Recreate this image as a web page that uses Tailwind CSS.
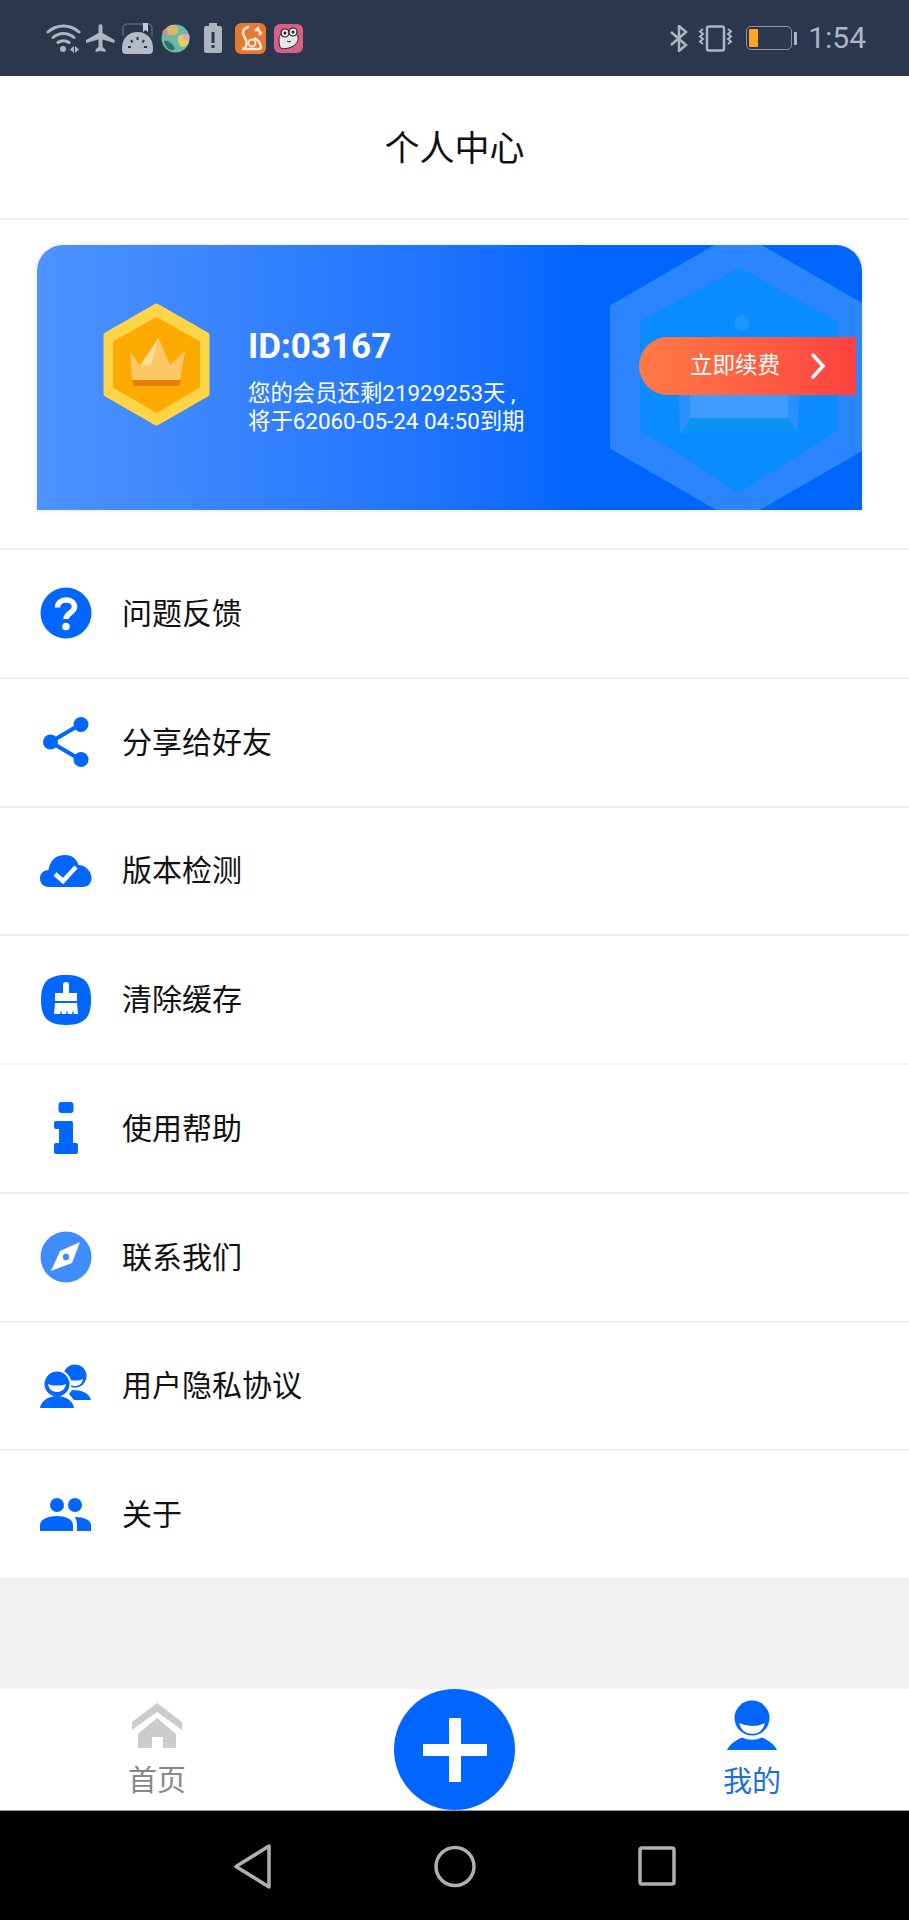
<!DOCTYPE html>
<html lang="zh-CN">
<head>
    <meta charset="UTF-8">
    <meta name="viewport" content="width=device-width, initial-scale=1.0">
    <title>个人中心</title>
    <script src="https://cdn.jsdelivr.net/npm/@tailwindcss/browser@4"></script>
</head>
<body class="bg-white font-['Roboto','Noto_Sans_CJK_SC',sans-serif] text-[#111]">
<div class="w-[909px] h-[1920px] flex flex-col overflow-hidden">

    <!-- status bar -->
    <div class="h-[76px] shrink-0 bg-[#2b374d] flex items-center pl-[46px] pr-[43px] text-[#aeb5c1]">
        <svg class="w-[35px] h-[30px]" viewBox="0 0 35 30" fill="none" stroke="currentColor" stroke-width="3" stroke-linecap="round"><path d="M2 9C11 1 24 1 33 9M7 14.500C13 9 22 9 28 14.500M12 19.500C15 17 20 17 23 19.500"/><circle cx="17" cy="26" r="3" fill="currentColor" stroke="none"/><path d="M28 23l-4 3.500 4 3.500zM29 23l4 3.500-4 3.500z" fill="currentColor" stroke="none"/></svg>
        <svg class="w-[29px] h-[29px] ml-[5px]" viewBox="0 0 29 29" fill="currentColor"><path d="M12.500 2c0-2.500 4-2.500 4 0v7l12 7v3l-12-3.500V23l3 2.500V28l-5-1-5 1v-2.500l3-2.500v-7.500L0 19v-3l12.500-7z"/></svg>
        <svg class="w-[31px] h-[31px] ml-[7px]" viewBox="0 0 31 31"><path d="M1 13V5a4 4 0 0 1 4-4h21a4 4 0 0 1 4 4v8" fill="none" stroke="#59647a" stroke-width="1.500"/><path d="M0 25C0 15 7 9 15.500 9S31 15 31 25v2a4 4 0 0 1-4 4H4a4 4 0 0 1-4-4z" fill="#b4bac6"/><path d="M21 0h5v9l-2.500-2-2.500 2z" fill="#c5cad3"/><path d="M15.500 14v3M9 17l1.500 2.500M22 17l-1.500 2.500M6 24h3M22 24h3" stroke="#2b374d" stroke-width="2"/></svg>
        <svg class="w-[29px] h-[29px] ml-[8px]" viewBox="0 0 29 29"><circle cx="14.500" cy="14.500" r="14" fill="#69b8a8"/><path d="M8 2c6-3 11 2 9 6s-8 4-12 2 0-6 3-8z" fill="#d9b763"/><path d="M18 12c4-3 9-2 10 2s-2 9-6 9-7-8-4-11z" fill="#e0cf62"/><path d="M3 17c5-1 9 3 11 8-4 3-9 0-11-8z" fill="#2f6f69"/><circle cx="25" cy="13" r="3.500" fill="#ef9dbb"/><circle cx="4" cy="8" r="2.500" fill="#df7fa1"/></svg>
        <svg class="w-[18px] h-[30px] ml-[14px]" viewBox="0 0 18 30"><rect x="5" y="0" width="8" height="3" fill="#aeb5c1"/><rect x="0" y="3" width="18" height="27" rx="2" fill="#aeb5c1"/><rect x="7.500" y="9" width="3" height="11" fill="#2b374d"/><rect x="7.500" y="22" width="3" height="3" fill="#2b374d"/></svg>
        <svg class="w-[31px] h-[31px] ml-[13px]" viewBox="0 0 31 31"><rect width="31" height="31" rx="6" fill="#e27a32"/><path d="M14 4c-6 1-7 5-5 9s4 6 2 10c-1 2-3 3-4 3h16c2 0 3-1 3-2-1-5-4-8-7-9M20 8l3-3 1 3 2 2-2 2" fill="none" stroke="#f5e4d4" stroke-width="2.500"/><circle cx="17" cy="20" r="3.500" fill="none" stroke="#f5e4d4" stroke-width="2"/></svg>
        <svg class="w-[29px] h-[29px] ml-[8px]" viewBox="0 0 29 29"><rect width="29" height="29" rx="6" fill="#d95f86"/><path d="M5 15c0-4 3-6 7-7 5-1 11 1 12 5 1 5-3 9-9 11-4 1-8 1-9-1-1-3-1-5-1-8z" fill="#e8e8ea" stroke="#222" stroke-width="1"/><circle cx="11" cy="9" r="4" fill="#e8e8ea" stroke="#222" stroke-width="1.200"/><circle cx="19" cy="8" r="4" fill="#e8e8ea" stroke="#222" stroke-width="1.200"/><circle cx="11" cy="9" r="1.500" fill="#222"/><circle cx="19" cy="8" r="1.500" fill="#222"/><path d="M13 17c1 1 3 1 4 0" fill="none" stroke="#222"/></svg>

        <svg class="w-[18px] h-[27px] ml-auto" viewBox="0 0 18 27" fill="none" stroke="currentColor" stroke-width="2.500"><path d="M1 7l15 13-7 6V1l7 6L1 20"/></svg>
        <svg class="w-[35px] h-[27px] ml-[10px]" viewBox="0 0 35 27" fill="none" stroke="currentColor" stroke-width="2.500"><rect x="9" y="1.500" width="17" height="24" rx="2"/><path d="M5 4l-3 2.500 3 2.500-3 2.500 3 2.500-3 2.500 3 2.500M30 4l3 2.500-3 2.500 3 2.500-3 2.500 3 2.500-3 2.500" stroke-width="2"/></svg>
        <div class="ml-[13px] w-[46px] h-[24px] rounded-[5px] border-[1.500px] border-[#8c94a3] p-[2px]">
            <div class="w-[9px] h-full bg-[#ffa51f] rounded-[1px]"></div>
        </div>
        <div class="ml-[2px] w-[3px] h-[13px] bg-[#aeb5c1] rounded-r-[1px]"></div>
        <span class="ml-[11px] text-[30px] leading-none">1:54</span>
    </div>

    <!-- title -->
    <div class="h-[142px] shrink-0 flex items-center justify-center text-[35px] pt-[7px]">个人中心</div>

    <!-- member card -->
    <div class="h-[330px] shrink-0 border-t-2 border-[#f0f0f0] pt-[25px] pl-[37px] pr-[47px]">
        <div class="relative h-[265px] rounded-t-[26px] overflow-hidden bg-linear-to-r from-[#4d92ff] to-[#0066ff] to-[66%] shadow-[0_0_6px_rgba(0,0,0,0.12)] flex items-center">
            <!-- big faded hexagon -->
            <svg class="absolute left-[573px] top-[-14px] w-[255px] h-[296px]" viewBox="0 0 255 296">
                <path d="M128 4L253 76V216L128 288L3 216V76Z" fill="#2b85ff" stroke="#2b85ff" stroke-width="6" stroke-linejoin="round"/>
                <path d="M129 42L223 94V196L129 256L35 196V94Z" fill="#0a8bff" stroke="#0a8bff" stroke-width="10" stroke-linejoin="round"/>
                <circle cx="132" cy="92" r="8" fill="#1a96ff"/>
                <path d="M68 150H190L188 202H70Z" fill="#2a8fff"/>
                <rect x="80" y="150" width="98" height="37" fill="#3f9bff"/>
                <path d="M80 187H178L188 202H72Z" fill="#0a93f5"/>
            </svg>

            <svg class="relative ml-[66px] mb-[26px] w-[107px] h-[123px] shrink-0" viewBox="0 0 107 123">
                <path d="M53.500 3L104 32V91L53.500 120L3 91V32Z" fill="#ffd548" stroke="#ffd548" stroke-width="5" stroke-linejoin="round"/>
                <path d="M53.500 15L96 39V84L53.500 109L11 84V39Z" fill="#ffaa00" stroke="#ffaa00" stroke-width="2" stroke-linejoin="round"/>
                <path d="M27 48L37 63L55.500 35L67 62L82 48L77 78H29Z" fill="#ffc866"/>
                <path d="M37 63L55.500 35L48 62Z" fill="#ffe09a"/>
                <path d="M29 77H78L76 83H31Z" fill="#e57f05"/>
            </svg>

            <div class="relative ml-[38px] mt-[7px] text-white">
                <div class="text-[35px] font-bold leading-[40px]">ID:03167</div>
                <div class="mt-[12px] text-[22.400px] leading-[28px] whitespace-nowrap">您的会员还剩21929253天 ,<br>将于62060-05-24 04:50到期</div>
            </div>

            <div class="relative ml-auto mr-[6px] mb-[24px] w-[217px] h-[58px] rounded-l-[29px] bg-linear-to-r from-[#ff7a45] to-[#ff4040] flex items-center pl-[51px] text-white text-[22.500px]">
                立即续费
                <svg class="ml-[31px] w-[15px] h-[26px]" viewBox="0 0 15 26" fill="none" stroke="currentColor" stroke-width="3.500" stroke-linecap="round"><path d="M2 2L12 13L2 24"/></svg>
            </div>
        </div>
    </div>

    <!-- menu -->
    <div class="shrink-0 text-[30px]">
        <div class="h-[128.750px] border-t-2 border-[#f0f0f0] flex items-center pl-[40px]">
            <svg class="w-[52px] h-[52px] mr-[30px]" viewBox="0 0 52 52"><circle cx="26" cy="26" r="25.500" fill="#0066ff"/><path d="M17.500 20.500C17.500 10.500 34.500 10.500 34.500 20C34.500 25.500 26 26 26 32" fill="none" stroke="#fff" stroke-width="5.500"/><circle cx="26" cy="39.500" r="3.800" fill="#fff"/></svg>
            问题反馈
        </div>
        <div class="h-[128.750px] border-t-2 border-[#f0f0f0] flex items-center pl-[40px]">
            <svg class="w-[52px] h-[52px] mr-[30px]" viewBox="0 0 52 52" fill="#0066ff"><path d="M10.500 26L41 8M10.500 26L41 44" stroke="#0066ff" stroke-width="4"/><circle cx="10.500" cy="26" r="7.500"/><circle cx="41" cy="8.500" r="7.500"/><circle cx="41" cy="43.500" r="7.500"/></svg>
            分享给好友
        </div>
        <div class="h-[128.750px] border-t-2 border-[#f0f0f0] flex items-center pl-[40px]">
            <svg class="w-[52px] h-[52px] mr-[30px]" viewBox="0 0 52 52"><path d="M9 42C3 42 0 38 0 33.500C0 28 4 25 8.500 25C10 15 16 10 25 10C33 10 37 15 38.500 20C45 20 51.500 26 51.500 33C51.500 38 48 42 43 42Z" fill="#0066ff"/><path d="M15 29L23 36L36 22" fill="none" stroke="#fff" stroke-width="4.500"/></svg>
            版本检测
        </div>
        <div class="h-[128.750px] border-t-2 border-[#f0f0f0] flex items-center pl-[40px]">
            <svg class="w-[52px] h-[52px] mr-[30px]" viewBox="0 0 52 52"><path d="M26 1C44 1 51 8 51 26S44 51 26 51 1 44 1 26 8 1 26 1Z" fill="#0066ff"/><path d="M23 11a3 3 0 0 1 6 0V19H37V27H15V19H23Z" fill="#fff"/><path d="M15 29H37L38 40H34L33 36.500 32 40H28L27 36.500 26 40H22L21 36.500 20 40H14Z" fill="#fff"/></svg>
            清除缓存
        </div>
        <div class="h-[128.750px] border-t-2 border-[#f0f0f0] flex items-center pl-[40px]">
            <svg class="w-[52px] h-[52px] mr-[30px]" viewBox="0 0 52 52" fill="#0066ff"><rect x="18.500" y="0" width="15" height="11" rx="3"/><path d="M16 19H31a2 2 0 0 1 2 2V41H36a2 2 0 0 1 2 2V50a2 2 0 0 1-2 2H16a2 2 0 0 1-2-2V43a2 2 0 0 1 2-2H19V27H16a2 2 0 0 1-2-2V21a2 2 0 0 1 2-2Z"/></svg>
            使用帮助
        </div>
        <div class="h-[128.750px] border-t-2 border-[#f0f0f0] flex items-center pl-[40px]">
            <svg class="w-[52px] h-[52px] mr-[30px]" viewBox="0 0 52 52"><circle cx="26" cy="26" r="25.500" fill="#3f8cff"/><path d="M40 11L32 32L11 40L20 20Z" fill="#fff"/><circle cx="26" cy="26" r="3.200" fill="#3f8cff"/></svg>
            联系我们
        </div>
        <div class="h-[128.750px] border-t-2 border-[#f0f0f0] flex items-center pl-[40px]">
            <svg class="w-[52px] h-[52px] mr-[30px]" viewBox="0 0 52 52" fill="#0066ff"><circle cx="35" cy="16" r="11.500"/><path d="M28 19C32 21 38 21 43 19C42 25 38 26 35 26S29 25 28 19Z" fill="#fff"/><path d="M32 30C42 30 49 33 51 40H34L29 34Z"/><circle cx="17" cy="24" r="13.500" stroke="#fff" stroke-width="2"/><path d="M8 24C13 26 21 26 26 24C25 30 21 32 17 32S9 30 8 24Z" fill="#fff"/><path d="M0 48C1 41 8 36 17 36S33 41 34 48Z"/></svg>
            用户隐私协议
        </div>
        <div class="h-[128.750px] border-t-2 border-[#f0f0f0] flex items-center pl-[40px]">
            <svg class="w-[52px] h-[52px] mr-[30px]" viewBox="0 0 52 52" fill="#0066ff"><circle cx="17" cy="16" r="7"/><circle cx="35" cy="16" r="7"/><path d="M0 42V36C0 30 9 27 17 27S33 30 33 36V42Z"/><path d="M35 28C44 28 51 31 51 36V42H37V36C37 33 36 30 35 28Z"/></svg>
            关于
        </div>
    </div>

    <!-- empty area -->
    <div class="flex-1 bg-[#f1f1f1]"></div>

    <!-- tab bar -->
    <div class="h-[121px] shrink-0 bg-white flex">
        <div class="w-[314px] flex flex-col items-center pt-[14px] text-[#888]">
            <svg class="w-[52px] h-[46px]" viewBox="0 0 52 46" fill="#cccccc"><path d="M26 0L51 19V27L26 9L1 27V19Z"/><path d="M26 15L45 31V45H32V34H21V45H7V31Z"/></svg>
            <span class="mt-[15px] text-[29px] leading-[34px]">首页</span>
        </div>
        <div class="flex-1 flex justify-center">
            <div class="w-[121px] h-[121px] rounded-full bg-[#0066ff] flex items-center justify-center">
                <svg class="w-[64px] h-[64px]" viewBox="0 0 64 64" fill="#fff"><rect x="26" y="0" width="12" height="64"/><rect x="0" y="26" width="64" height="12"/></svg>
            </div>
        </div>
        <div class="w-[314px] flex flex-col items-center pt-[11px] text-[#1a6fe0]">
            <svg class="w-[50px] h-[51px]" viewBox="0 0 50 51" fill="#0066ff"><circle cx="25" cy="18" r="17.500"/><path d="M12 23Q25 29 38 23Q35 34 25 34Q15 34 12 23Z" fill="#fff"/><path d="M0 50C3 44 9 40 15 37.500Q25 42 35 37.500C41 40 47 44 50 50Z"/></svg>
            <span class="mt-[14px] text-[29px] leading-[34px]">我的</span>
        </div>
    </div>

    <!-- android nav bar -->
    <div class="h-[110px] shrink-0 bg-black border-t border-[#999] flex items-start pt-[33px]">
        <svg class="w-[909px] h-[46px]" viewBox="0 0 909 46" fill="none" stroke="#b0b0b0" stroke-width="3.500" stroke-linejoin="round">
            <path d="M269 2V43L236 22.500Z"/>
            <ellipse cx="455" cy="22.500" rx="19" ry="19"/>
            <rect x="640" y="4" width="34" height="36" rx="2"/>
        </svg>
    </div>
</div>
</body>
</html>
